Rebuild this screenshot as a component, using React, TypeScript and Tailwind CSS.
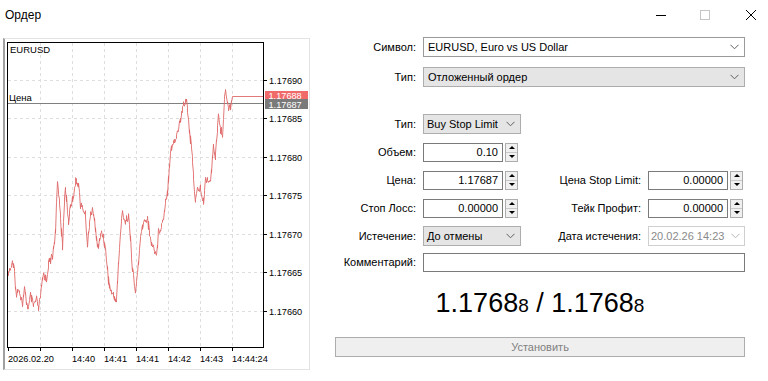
import React from 'react';

const keyPts: [number, number][] = [
  [8, 272], [10, 268], [12, 264], [14, 272], [16, 298], [18, 286], [20, 296], [22, 304], [24, 290], [26, 302],
  [28, 309], [30, 296], [33, 306], [36, 300], [38, 309], [40, 296], [43, 274], [46, 280], [48, 264], [52, 256],
  [55, 232], [57, 182], [59, 200], [62, 248], [64, 200], [65, 188], [68, 222], [70, 205], [72, 200], [75, 182],
  [78, 183], [80, 205], [83, 210], [85, 215], [87, 246], [90, 212], [93, 212], [96, 240], [98, 246], [101, 232],
  [103, 236], [106, 258], [108, 280], [110, 290], [113, 296], [116, 300], [118, 265], [120, 232], [122, 212],
  [125, 222], [128, 215], [130, 240], [132, 268], [135, 294], [138, 262], [140, 240], [142, 226], [145, 220],
  [147, 218], [150, 240], [152, 245], [155, 252], [156, 256], [158, 232], [161, 225], [163, 218], [165, 200],
  [167, 192], [170, 150], [172, 145], [175, 140], [178, 128], [181, 115], [183, 105], [186, 98], [188, 120],
  [190, 140], [192, 160], [194, 190], [195, 202], [197, 190], [200, 188], [202, 200], [203, 202], [205, 180],
  [208, 179], [210, 182], [212, 160], [213, 143], [215, 157], [217, 130], [218, 113], [220, 130], [222, 133],
  [224, 100], [225, 89], [227, 102], [228, 110], [230, 106], [232, 96],
];

function rnd(i: number) {
  const s = Math.sin(i * 12.9898) * 43758.5453;
  return s - Math.floor(s);
}

function baseY(x: number) {
  for (let i = 0; i < keyPts.length - 1; i++) {
    const [x0, y0] = keyPts[i];
    const [x1, y1] = keyPts[i + 1];
    if (x >= x0 && x <= x1) return y0 + ((y1 - y0) * (x - x0)) / (x1 - x0);
  }
  return 96;
}

// tick-like stair line: each pixel column gets a short vertical jump
function buildLine() {
  const pts: string[] = [];
  for (let x = 8; x <= 231; x++) {
    const b = baseY(x);
    const a = b + (rnd(x * 2) - 0.5) * 9;
    const c = b + (rnd(x * 2 + 1) - 0.5) * 9;
    pts.push(`${x + 0.5},${a.toFixed(1)}`);
    pts.push(`${x + 0.5},${c.toFixed(1)}`);
  }
  pts.push('232.5,96.5');
  pts.push('263,96.5');
  return pts.join(' ');
}

const priceLevels = [
  { y: 80.5, t: '1.17690' },
  { y: 118.5, t: '1.17685' },
  { y: 157.5, t: '1.17680' },
  { y: 195.5, t: '1.17675' },
  { y: 234.5, t: '1.17670' },
  { y: 272.5, t: '1.17665' },
  { y: 311.5, t: '1.17660' },
];

const timeTicks = [
  { x: 8, t: '2026.02.20' },
  { x: 40, t: '' },
  { x: 72, t: '14:40' },
  { x: 104, t: '14:41' },
  { x: 136, t: '14:41' },
  { x: 168, t: '14:42' },
  { x: 200, t: '14:43' },
  { x: 232, t: '14:44:24' },
];

const Chart = () => (
  <svg width="304" height="330" viewBox="5 39 304 330" style={{ fontFamily: '"Liberation Sans", Arial, sans-serif' }}>
    {priceLevels.map((p) => (
      <line key={p.y} x1="8" x2="263" y1={p.y} y2={p.y} stroke="#dedede" strokeDasharray="3 3" />
    ))}
    {timeTicks.slice(1).map((t) => (
      <line key={t.x} x1={t.x + 0.5} x2={t.x + 0.5} y1="43" y2="347" stroke="#dedede" strokeDasharray="3 3" />
    ))}
    <text x="10" y="53" fontSize="9.5" fill="#000">EURUSD</text>
    <text x="9" y="101" fontSize="9.5" fill="#000">Цена</text>
    <line x1="8" x2="263" y1="103.5" y2="103.5" stroke="#808080" />
    <polyline points={buildLine()} fill="none" stroke="#e06a6a" strokeWidth="0.9" />
    <rect x="7.5" y="42.5" width="256" height="305" fill="none" stroke="#000" />
    {priceLevels.map((p) => (
      <g key={p.t}>
        <line x1="263" x2="267" y1={p.y} y2={p.y} stroke="#000" />
        <text x="269" y={p.y + 3.5} fontSize="9.2" fill="#000">{p.t}</text>
      </g>
    ))}
    {timeTicks.map((t) => (
      <g key={t.x}>
        <line x1={t.x + 0.5} x2={t.x + 0.5} y1="347" y2="351" stroke="#000" />
        {t.t && <text x={t.x} y="361.5" fontSize="9.2" fill="#000">{t.t}</text>}
      </g>
    ))}
    <rect x="265" y="91" width="43" height="9" fill="#f06a6a" />
    <text x="268.5" y="99" fontSize="9.2" fill="#fff">1.17688</text>
    <rect x="265" y="99" width="43" height="10" fill="#7a7a7a" />
    <text x="268.5" y="107.5" fontSize="9.2" fill="#fff">1.17687</text>
  </svg>
);

const Chevron = ({ color = '#5f5f5f' }: { color?: string }) => (
  <svg width="9" height="6" viewBox="0 0 9 6">
    <polyline points="0.5,0.8 4.5,4.8 8.5,0.8" fill="none" stroke={color} strokeWidth="1" />
  </svg>
);

const Spinner = () => (
  <div className="flex flex-col w-[13px] h-[19px] border border-[#adadad] bg-[#f0f0f0]">
    <div className="flex-1 flex items-center justify-center border-b border-[#c8c8c8]">
      <div className="w-0 h-0 border-l-[3px] border-r-[3px] border-b-[3px] border-l-transparent border-r-transparent border-b-black" />
    </div>
    <div className="flex-1 flex items-center justify-center">
      <div className="w-0 h-0 border-l-[3px] border-r-[3px] border-t-[3px] border-l-transparent border-r-transparent border-t-black" />
    </div>
  </div>
);

const NumField = ({ value }: { value: string }) => (
  <div className="flex items-center gap-[2px]">
    <div className="w-[80px] h-[19px] border border-[#7a7a7a] bg-white flex items-center justify-end pr-[4px]">{value}</div>
    <Spinner />
  </div>
);

const Label = ({ children, w = 'w-[88px]' }: { children: React.ReactNode; w?: string }) => (
  <div className={`${w} text-right pr-[7px] shrink-0`}>{children}</div>
);

export default function App() {
  return (
    <div className="w-[768px] h-[381px] bg-white flex flex-col overflow-hidden text-black font-['Liberation_Sans',Arial,sans-serif]">
      <div className="h-[30px] shrink-0 flex items-center pl-[5px] text-[12px]">
        <span>Ордер</span>
        <div className="ml-auto flex items-center">
          <svg width="10" height="10" viewBox="0 0 10 10" className="mr-[34px]">
            <line x1="0" x2="10" y1="5.5" y2="5.5" stroke="#000" />
          </svg>
          <svg width="10" height="10" viewBox="0 0 10 10" className="mr-[36px]">
            <rect x="0.5" y="0.5" width="9" height="9" fill="none" stroke="#c4c4c4" />
          </svg>
          <svg width="10" height="10" viewBox="0 0 10 10" className="mr-[12px]">
            <line x1="0" y1="0" x2="10" y2="10" stroke="#000" />
            <line x1="10" y1="0" x2="0" y2="10" stroke="#000" />
          </svg>
        </div>
      </div>

      <div className="flex flex-1">
        <div className="ml-[3px] mt-[8px] w-[307px] h-[332px] border border-[#e3e3e3] border-l-2 border-l-[#a0a0a0] shrink-0">
          <Chart />
        </div>

        <div className="ml-[25px] w-[410px] flex flex-col text-[11px]">
          <div className="mt-[7px] h-[20px] flex items-center">
            <Label>Символ:</Label>
            <div className="flex-1 h-[20px] border border-[#9a9a9a] bg-white flex items-center pl-[4px] pr-[5px]">
              <span className="flex-1">EURUSD, Euro vs US Dollar</span>
              <Chevron />
            </div>
          </div>
          <div className="mt-[10px] h-[20px] flex items-center">
            <Label>Тип:</Label>
            <div className="flex-1 h-[20px] border border-[#adadad] bg-[#e5e5e5] flex items-center pl-[4px] pr-[5px]">
              <span className="flex-1">Отложенный ордер</span>
              <Chevron />
            </div>
          </div>

          <div className="mt-[27px] h-[20px] flex items-center">
            <Label>Тип:</Label>
            <div className="w-[98px] h-[20px] border border-[#adadad] bg-[#e5e5e5] flex items-center pl-[3px] pr-[5px]">
              <span className="flex-1">Buy Stop Limit</span>
              <Chevron />
            </div>
          </div>
          <div className="mt-[8px] h-[20px] flex items-center">
            <Label>Объем:</Label>
            <NumField value="0.10" />
          </div>
          <div className="mt-[8px] h-[20px] flex items-center">
            <Label>Цена:</Label>
            <NumField value="1.17687" />
            <Label w="w-[130px]">Цена Stop Limit:</Label>
            <NumField value="0.00000" />
          </div>
          <div className="mt-[8px] h-[20px] flex items-center">
            <Label>Стоп Лосс:</Label>
            <NumField value="0.00000" />
            <Label w="w-[130px]">Тейк Профит:</Label>
            <NumField value="0.00000" />
          </div>
          <div className="mt-[8px] h-[20px] flex items-center">
            <Label>Истечение:</Label>
            <div className="w-[98px] h-[20px] border border-[#adadad] bg-[#e5e5e5] flex items-center pl-[3px] pr-[5px]">
              <span className="flex-1">До отмены</span>
              <Chevron />
            </div>
            <Label w="w-[127px]">Дата истечения:</Label>
            <div className="flex-1 h-[20px] border border-[#cfcfcf] bg-white flex items-center pl-[2px] pr-[4px] text-[#8a8a8a]">
              <span className="flex-1">20.02.26 14:23</span>
              <Chevron color="#b5b5b5" />
            </div>
          </div>
          <div className="mt-[7px] h-[19px] flex items-center">
            <Label>Комментарий:</Label>
            <div className="flex-1 h-[19px] border border-[#7a7a7a] bg-white" />
          </div>

          <div className="mt-[15px] h-[32px] leading-[32px] text-center text-[27px] whitespace-nowrap">
            1.1768<span className="text-[19px]">8</span> / 1.1768<span className="text-[19px]">8</span>
          </div>

          <div className="mt-[18px] h-[20px] border border-[#adadad] bg-[#efefef] flex items-center justify-center text-[#808080]">
            Установить
          </div>
        </div>
      </div>
    </div>
  );
}
